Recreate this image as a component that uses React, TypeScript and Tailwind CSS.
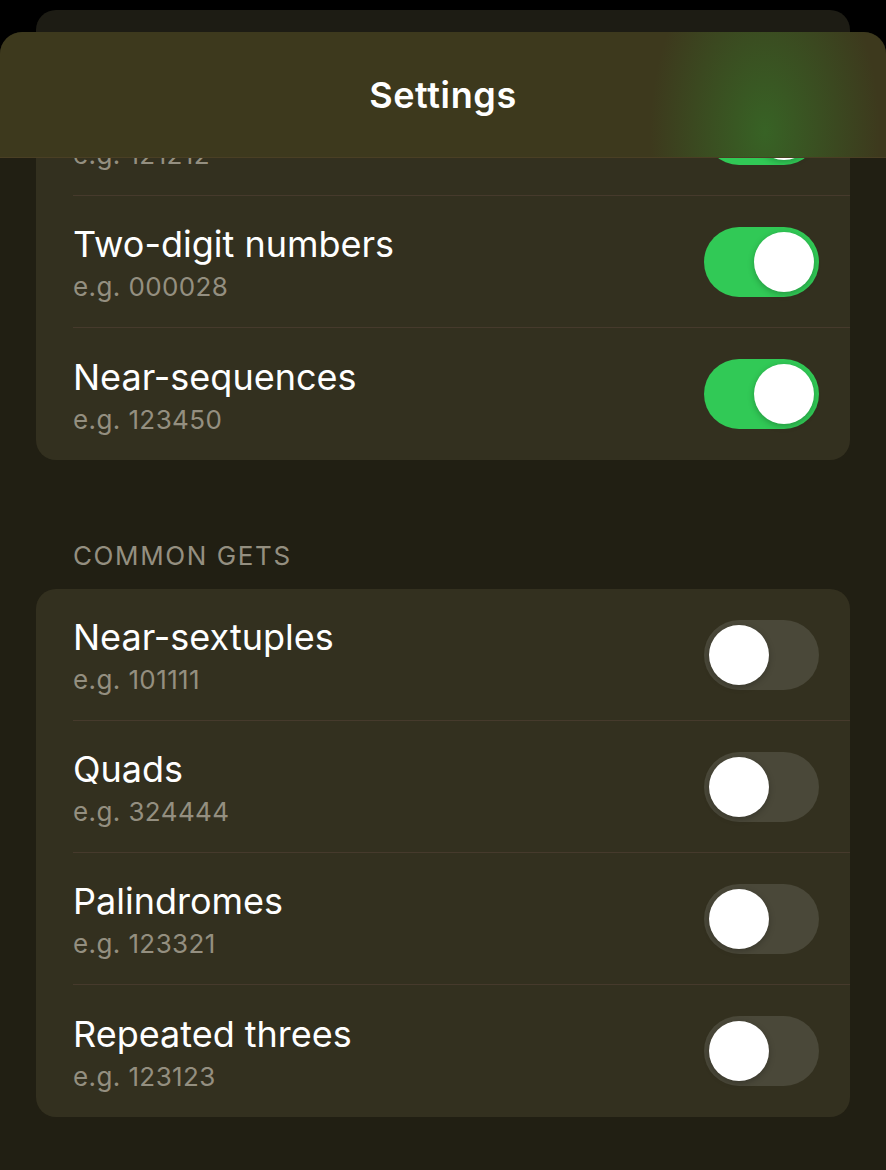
import React from "react";

type Row = { title: string; sub: string; on: boolean };

const group1: Row[] = [
  { title: "Repeated twos", sub: "e.g. 121212", on: true },
  { title: "Two-digit numbers", sub: "e.g. 000028", on: true },
  { title: "Near-sequences", sub: "e.g. 123450", on: true },
];

const group2: Row[] = [
  { title: "Near-sextuples", sub: "e.g. 101111", on: false },
  { title: "Quads", sub: "e.g. 324444", on: false },
  { title: "Palindromes", sub: "e.g. 123321", on: false },
  { title: "Repeated threes", sub: "e.g. 123123", on: false },
];

function Toggle({ on }: { on: boolean }) {
  return (
    <div
      className={
        "relative h-[70px] w-[115px] shrink-0 rounded-full " +
        (on ? "bg-[#31c956]" : "bg-[#4a4839]")
      }
    >
      <div
        className={
          "absolute top-[5px] h-[60px] w-[60px] rounded-full bg-white shadow-[0_2px_6px_rgba(0,0,0,0.25)] " +
          (on ? "right-[5px]" : "left-[5px]")
        }
      />
    </div>
  );
}

function Card({ rows }: { rows: Row[] }) {
  return (
    <div className="overflow-hidden rounded-[20px] bg-[#33301f]">
      {rows.map((r, i) => (
        <div key={r.title} className="flex pl-[37px]">
          <div
            className={
              "flex h-[132px] flex-1 items-center pr-[31px] " +
              (i < rows.length - 1 ? "border-b border-[#463a2c]" : "")
            }
          >
            <div className="flex flex-1 flex-col pt-[2px]">
              <div className="text-[36px] leading-[42px] text-white">{r.title}</div>
              <div className="mt-[7px] text-[26px] leading-[30px] tracking-[0.4px] text-[#948f80]">{r.sub}</div>
            </div>
            <Toggle on={r.on} />
          </div>
        </div>
      ))}
    </div>
  );
}

export default function App() {
  return (
    <div
      className="flex h-[1170px] w-[886px] flex-col overflow-hidden bg-black pt-[10px]"
      style={{ fontFamily: "Inter, 'Noto Sans', sans-serif" }}
    >
      <div className="mx-[36px] h-[22px] shrink-0 rounded-t-[20px] bg-[#1d1c14]" />
      <div className="relative flex-1 overflow-hidden rounded-t-[22px] bg-[#211f13]">
        <div className="px-[36px] pt-[32px]">
          <Card rows={group1} />
          <div className="mb-[17px] mt-[80px] pl-[37px] text-[26px] leading-[32px] tracking-[1.6px] text-[#948f80]">
            COMMON GETS
          </div>
          <Card rows={group2} />
        </div>
        <div className="absolute left-0 right-0 top-0 flex h-[126px] items-center justify-center border-b border-[#4a3f24] bg-[#3d391d] bg-[radial-gradient(ellipse_115px_190px_at_765px_100px,rgba(50,140,45,0.5),rgba(50,140,45,0)_100%)]">
          <span className="text-[36px] font-semibold tracking-[0.6px] text-white">Settings</span>
        </div>
      </div>
    </div>
  );
}
